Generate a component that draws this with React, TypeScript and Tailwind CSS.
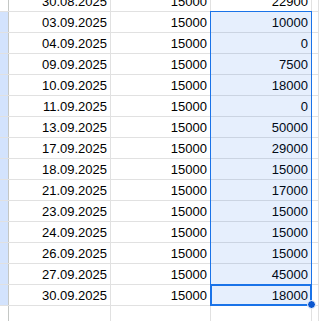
import React from "react";

type Row = { date: string; plan: string; fact: string };

const rows: Row[] = [
  { date: "30.08.2025", plan: "15000", fact: "22900" },
  { date: "03.09.2025", plan: "15000", fact: "10000" },
  { date: "04.09.2025", plan: "15000", fact: "0" },
  { date: "09.09.2025", plan: "15000", fact: "7500" },
  { date: "10.09.2025", plan: "15000", fact: "18000" },
  { date: "11.09.2025", plan: "15000", fact: "0" },
  { date: "13.09.2025", plan: "15000", fact: "50000" },
  { date: "17.09.2025", plan: "15000", fact: "29000" },
  { date: "18.09.2025", plan: "15000", fact: "15000" },
  { date: "21.09.2025", plan: "15000", fact: "17000" },
  { date: "23.09.2025", plan: "15000", fact: "15000" },
  { date: "24.09.2025", plan: "15000", fact: "15000" },
  { date: "26.09.2025", plan: "15000", fact: "15000" },
  { date: "27.09.2025", plan: "15000", fact: "45000" },
  { date: "30.09.2025", plan: "15000", fact: "18000" },
  { date: "", plan: "", fact: "" },
];

const SheetRow = ({ row, selected }: { row: Row; selected: boolean }) => (
  <div className="flex h-[21px] border-b border-[#e1e1e1]">
    {/* row header strip */}
    <div
      className={`w-[9px] shrink-0 border-r border-[#c4c7c5] ${selected ? "bg-[#d3e3fd]" : "bg-white"}`}
    />
    <div className="flex w-[102px] shrink-0 items-end justify-end border-r border-[#e1e1e1] pr-[3px] pb-[2px] leading-[15px]">
      {row.date}
    </div>
    <div className="flex w-[100px] shrink-0 items-end justify-end border-r border-[#e1e1e1] pr-[3px] pb-[2px] leading-[15px]">
      {row.plan}
    </div>
    <div className="flex w-[101px] shrink-0 items-end justify-end border-r border-[#e1e1e1] pr-[3px] pb-[2px] leading-[15px]">
      {row.fact}
    </div>
    <div className="w-[7px] shrink-0 border-r border-[#e1e1e1]" />
  </div>
);

export default function App() {
  return (
    <div
      className="h-[321px] w-[319px] overflow-hidden bg-white text-[13px] text-black"
      style={{ fontFamily: '"Liberation Sans", Arial, sans-serif' }}
    >
      <div className="relative -mt-[9px]">
        {rows.map((row, i) => (
          <SheetRow key={i} row={row} selected={i > 0 && i < rows.length - 1} />
        ))}

        {/* selected range C2:C15 */}
        <div className="pointer-events-none absolute top-[20px] left-[210px] h-[295px] w-[102px] border border-[#1a73e8] bg-[#0e65eb]/10" />

        {/* active cell */}
        <div className="pointer-events-none absolute top-[293px] left-[210px] h-[22px] w-[102px] border-2 border-[#1a73e8]" />

        {/* fill handle */}
        <div className="pointer-events-none absolute top-[309px] left-[307px] h-[9px] w-[9px] rounded-full border border-white bg-[#0b57d0]" />
      </div>
    </div>
  );
}
